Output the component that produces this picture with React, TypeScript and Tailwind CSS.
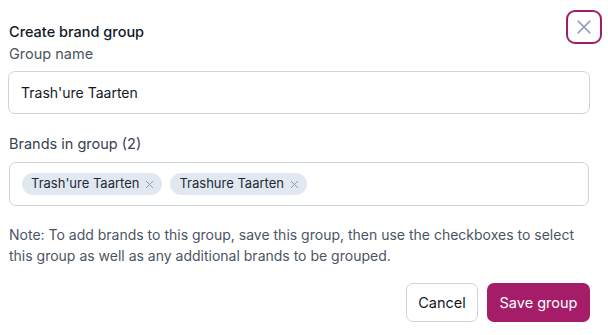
import React from 'react';

const brands = ["Trash'ure Taarten", 'Trashure Taarten'];

function XIcon({ className }: { className?: string }) {
  return (
    <svg viewBox="0 0 24 24" fill="none" stroke="currentColor" strokeWidth={2} strokeLinecap="round" className={className}>
      <path d="M5 5l14 14M19 5L5 19" />
    </svg>
  );
}

export default function App() {
  return (
    <div className="relative w-[608px] h-[335px] bg-white font-['Inter',sans-serif] text-[#1f2937]">
      <button className="absolute left-[566px] top-[10px] w-[36px] h-[34px] flex items-center justify-center rounded-[9px] border-2 border-[#a21c66] text-[#94a3b8]">
        <XIcon className="w-[20px] h-[20px]" />
      </button>

      <div className="pl-[9px] pr-[18px] pt-[22px]">
        <h2 className="text-[14.5px] font-medium leading-[20px] text-[#111827]">Create brand group</h2>
        <label className="block text-[14.5px] leading-[20px] text-[#4b5563] mt-[2px]">Group name</label>
        <input
          defaultValue="Trash'ure Taarten"
          className="mt-[7px] -ml-px w-[582px] h-[43px] rounded-[7px] border border-[#cfd4de] px-[12px] text-[14px] text-[#111827] outline-none"
        />

        <div className="mt-[20px] text-[14.5px] leading-[20px] text-[#374151]">Brands in group (2)</div>
        <div className="mt-[8px] w-[580px] h-[44px] rounded-[7px] border border-[#cfd4de] flex items-center gap-[8px] px-[12px]">
          {brands.map((b) => (
            <span key={b} className="flex items-center gap-[5px] h-[22px] rounded-full bg-[#e2e8f0] pl-[9px] pr-[7px] text-[13px] text-[#1f2937]">
              {b}
              <XIcon className="w-[11px] h-[11px] text-[#8a94a6]" />
            </span>
          ))}
        </div>

        <p className="mt-[18px] text-[14px] leading-[21px] text-[#4b5563] w-[580px]">
          Note: To add brands to this group, save this group, then use the checkboxes to select this group as well as any additional brands to be grouped.
        </p>

        <div className="mt-[17px] flex justify-end gap-[9px] w-[581px]">
          <button className="h-[39px] w-[72px] rounded-[7px] border border-[#cfd4de] bg-white text-[14.5px] text-[#111827]">Cancel</button>
          <button className="h-[39px] w-[103px] rounded-[7px] bg-[#a51d68] text-[14.5px] text-white">Save group</button>
        </div>
      </div>
    </div>
  );
}
